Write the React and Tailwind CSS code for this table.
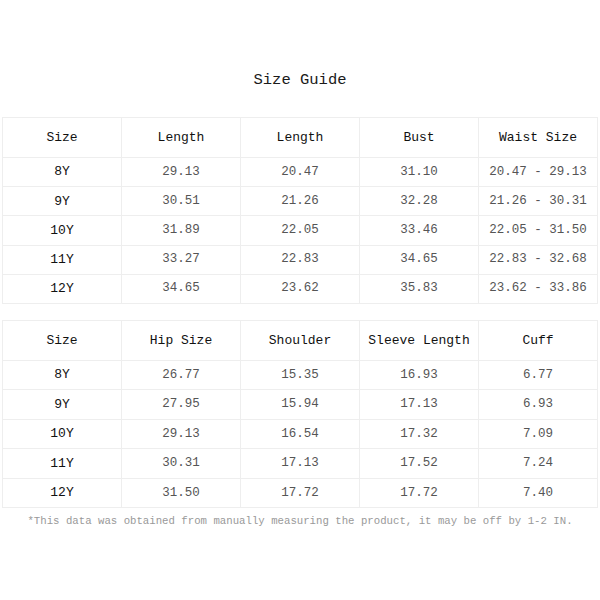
const table1 = {
  head: ['Size', 'Length', 'Length', 'Bust', 'Waist Size'],
  rows: [
    ['8Y', '29.13', '20.47', '31.10', '20.47 - 29.13'],
    ['9Y', '30.51', '21.26', '32.28', '21.26 - 30.31'],
    ['10Y', '31.89', '22.05', '33.46', '22.05 - 31.50'],
    ['11Y', '33.27', '22.83', '34.65', '22.83 - 32.68'],
    ['12Y', '34.65', '23.62', '35.83', '23.62 - 33.86'],
  ],
};

const table2 = {
  head: ['Size', 'Hip Size', 'Shoulder', 'Sleeve Length', 'Cuff'],
  rows: [
    ['8Y', '26.77', '15.35', '16.93', '6.77'],
    ['9Y', '27.95', '15.94', '17.13', '6.93'],
    ['10Y', '29.13', '16.54', '17.32', '7.09'],
    ['11Y', '30.31', '17.13', '17.52', '7.24'],
    ['12Y', '31.50', '17.72', '17.72', '7.40'],
  ],
};

const SizeTable = ({ data, rowH }) => (
  <table className="w-[596px] border-collapse table-fixed">
    <thead>
      <tr className="h-[40px]">
        {data.head.map((h, i) => (
          <th
            key={i}
            className="border border-[#eeeeee] text-[13px] font-normal text-[#111111] text-center"
          >
            {h}
          </th>
        ))}
      </tr>
    </thead>
    <tbody>
      {data.rows.map((row, r) => (
        <tr key={r} className={rowH}>
          {row.map((cell, i) => (
            <td
              key={i}
              className={`border border-[#eeeeee] text-center ${
                i === 0 ? 'text-[13px] text-[#111111]' : 'text-[12.5px] text-[#555555]'
              }`}
            >
              {cell}
            </td>
          ))}
        </tr>
      ))}
    </tbody>
  </table>
);

const App = () => {
  return (
    <div
      className="w-[600px] h-[600px] bg-white flex flex-col items-center"
      style={{ fontFamily: '"Liberation Mono", monospace' }}
    >
      <h1 className="mt-[69px] text-[15.5px] text-[#1a1a1a] leading-[22px]">Size Guide</h1>
      <div className="mt-[26px]">
        <SizeTable data={table1} rowH="h-[29.2px]" />
      </div>
      <div className="mt-[16px]">
        <SizeTable data={table2} rowH="h-[29.5px]" />
      </div>
      <p className="mt-[5px] text-[10.7px] text-[#999999]">
        *This data was obtained from manually measuring the product, it may be off by 1-2 IN.
      </p>
    </div>
  );
};

export default App;
